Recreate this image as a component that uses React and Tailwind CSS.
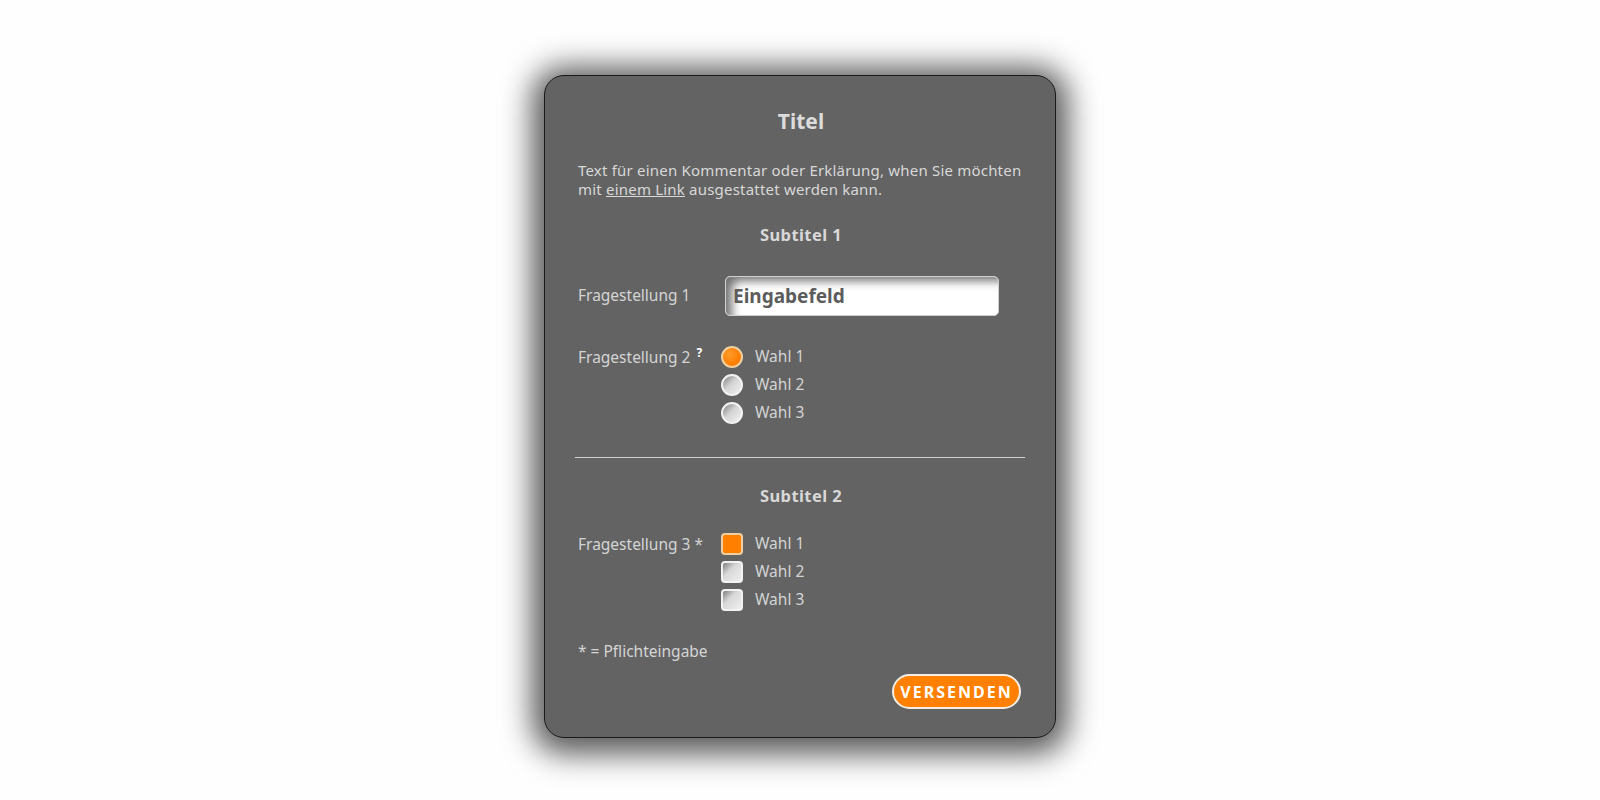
import React from 'react';

const font = { fontFamily: '"Noto Sans", "Open Sans", sans-serif' };

const Radio = ({ checked }) => (
  <span
    className={
      checked
        ? 'w-[22px] h-[22px] rounded-full border-2 border-[#f0d0a0] bg-[radial-gradient(circle_at_35%_35%,#ff9a2a,#ff7b00_70%)] shrink-0'
        : 'w-[22px] h-[22px] rounded-full border-2 border-[#f2f2f2] bg-[linear-gradient(135deg,#7e7e7e_0%,#d4d4d4_45%,#f2f2f2_100%)] shrink-0'
    }
  />
);

const Checkbox = ({ checked }) => (
  <span
    className={
      checked
        ? 'w-[22px] h-[22px] rounded-[4px] border-2 border-[#f0d0a0] bg-[#ff8000] shrink-0'
        : 'w-[22px] h-[22px] rounded-[4px] border-2 border-[#f2f2f2] bg-[linear-gradient(135deg,#7e7e7e_0%,#d8d8d8_40%,#efefef_100%)] shrink-0'
    }
  />
);

const Choice = ({ children, label }) => (
  <div className="h-[28px] flex items-center gap-3">
    {children}
    <span className="text-[15.5px] text-[#d4d4d4]">{label}</span>
  </div>
);

export default function App() {
  const wahl = ['Wahl 1', 'Wahl 2', 'Wahl 3'];

  return (
    <div className="min-h-screen bg-[#fefefe] pt-[75px]" style={font}>
      <div className="mx-auto w-[512px] h-[663px] bg-[#636363] border border-[#1a1a1a] rounded-[20px] shadow-[0_4px_30px_12px_rgba(0,0,0,0.65)] pl-[33px] pr-[31px] pt-[31px] flex flex-col">
        <h1 className="text-center text-[21px] leading-[28px] font-bold text-[#dcdcdc]">Titel</h1>

        <p className="mt-[26px] text-[15px] leading-[19px] tracking-[0.2px] whitespace-nowrap text-[#d8d8d8]">
          Text für einen Kommentar oder Erklärung, when Sie möchten
          <br />
          mit <a href="#" className="underline">einem Link</a> ausgestattet werden kann.
        </p>

        <h2 className="mt-[26px] text-center text-[16.5px] leading-[20px] font-bold tracking-[0.4px] text-[#d8d8d8]">Subtitel 1</h2>

        <div className="mt-[31px] grid grid-cols-[143px_1fr] items-center">
          <span className="text-[15.5px] text-[#d4d4d4]">Fragestellung 1</span>
          <div className="ml-[4px] w-[274px] h-[40px] rounded-[5px] border border-[#d0d0d0] bg-white shadow-[inset_10px_8px_10px_-4px_rgba(0,0,0,0.55)] flex items-center pl-[7px]">
            <span className="text-[19px] font-bold text-[#5c5c5c]">Eingabefeld</span>
          </div>
        </div>

        <div className="mt-[27px] grid grid-cols-[143px_1fr]">
          <span className="text-[15.5px] leading-[28px] text-[#d4d4d4]">
            Fragestellung 2
            <sup className="ml-[6px] text-[12px] font-bold text-white">?</sup>
          </span>
          <div className="flex flex-col">
            {wahl.map((w, i) => (
              <Choice key={w} label={w}>
                <Radio checked={i === 0} />
              </Choice>
            ))}
          </div>
        </div>

        <div className="mt-[30px] -ml-[3px] -mr-[1px] h-px bg-[#d0d0d0]" />

        <h2 className="mt-[28px] text-center text-[16.5px] leading-[20px] font-bold tracking-[0.4px] text-[#d8d8d8]">Subtitel 2</h2>

        <div className="mt-[24px] grid grid-cols-[143px_1fr]">
          <span className="text-[15.5px] leading-[28px] text-[#d4d4d4]">Fragestellung 3 *</span>
          <div className="flex flex-col">
            {wahl.map((w, i) => (
              <Choice key={w} label={w}>
                <Checkbox checked={i === 0} />
              </Choice>
            ))}
          </div>
        </div>

        <p className="mt-[27px] text-[15.5px] leading-[20px] text-[#d4d4d4]">* = Pflichteingabe</p>

        <div className="mt-[13px] flex justify-end pr-[3px]">
          <button className="w-[129px] h-[35px] rounded-full bg-[#ff8000] border-2 border-[#f4ede4] text-white text-[16px] font-bold tracking-[2px]">
            VERSENDEN
          </button>
        </div>
      </div>
    </div>
  );
}
